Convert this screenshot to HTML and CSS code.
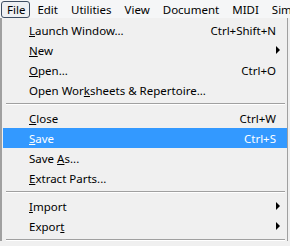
FILE: index.html
```html
<!DOCTYPE html>
<html>
<head>
<meta charset="utf-8">
<link rel="stylesheet" href="styles.css">
</head>
<body>
<div class="menubar">
  <span class="mb-item active">File</span>
  <span class="mb-item">Edit</span>
  <span class="mb-item">Utilities</span>
  <span class="mb-item">View</span>
  <span class="mb-item">Document</span>
  <span class="mb-item">MIDI</span>
  <span class="mb-item">Sim</span>
</div>
<div class="menu">
  <div class="row"><span class="label"><u>L</u>aunch Window...</span><span class="key">Ctrl+Shift+N</span></div>
  <div class="row"><span class="label"><u>N</u>ew</span><span class="arrow"></span></div>
  <div class="row"><span class="label"><u>O</u>pen...</span><span class="key">Ctrl+O</span></div>
  <div class="row"><span class="label">Open Wor<u>k</u>sheets &amp; Repertoire...</span></div>
  <div class="sep"></div>
  <div class="row"><span class="label"><u>C</u>lose</span><span class="key">Ctrl+W</span></div>
  <div class="row selected"><span class="label"><u>S</u>ave</span><span class="key">Ctrl+S</span></div>
  <div class="row"><span class="label">Save <u>A</u>s...</span></div>
  <div class="row"><span class="label"><u>E</u>xtract Parts...</span></div>
  <div class="sep"></div>
  <div class="row"><span class="label"><u>I</u>mport</span><span class="arrow"></span></div>
  <div class="row"><span class="label">Expor<u>t</u></span><span class="arrow"></span></div>
  <div class="sep"></div>
</div>
</body>
</html>
```
FILE: styles.css
```css
html, body {
  margin: 0;
  padding: 0;
}
body {
  width: 290px;
  height: 246px;
  overflow: hidden;
  background: #f0f0f0;
  font-family: "Noto Sans", "DejaVu Sans", sans-serif;
  font-size: 11.5px;
  color: #000;
}
.menubar {
  display: flex;
  height: 18px;
  align-items: center;
  padding-left: 1px;
  background: #f5f6f7;
  overflow: hidden;
}
.mb-item {
  height: 17px;
  line-height: 15px;
  padding: 0 4px 0 5px;
  border: 1px solid transparent;
  border-radius: 3px;
  box-sizing: border-box;
  white-space: nowrap;
  flex-shrink: 0;
}
.mb-item + .mb-item {
  padding: 0 5px 0 6px;
}
.mb-item.active {
  border-color: #3e4e63;
  background: #eef0f3;
}
.menu {
  border-left: 2px solid #a0a0a0;
  border-right: 1px solid #a0a0a0;
  width: 284px;
  padding: 2px 0 0 1px;
  background: #f0f0f0;
}
.row {
  display: flex;
  align-items: center;
  height: 20px;
  padding: 0 6px 0 26px;
}
.label {
  flex: 1;
  white-space: nowrap;
}
.key {
  white-space: nowrap;
  margin-right: 5px;
}
.arrow {
  width: 0;
  height: 0;
  margin-right: 1px;
  border-top: 4px solid transparent;
  border-bottom: 4px solid transparent;
  border-left: 4px solid #000;
}
.selected {
  background: #3399ff;
  color: #fff;
}
.sep {
  margin: 3px 2px 3px 3px;
  border-top: 1px solid #a0a0a0;
  border-bottom: 1px solid #fff;
}
```
